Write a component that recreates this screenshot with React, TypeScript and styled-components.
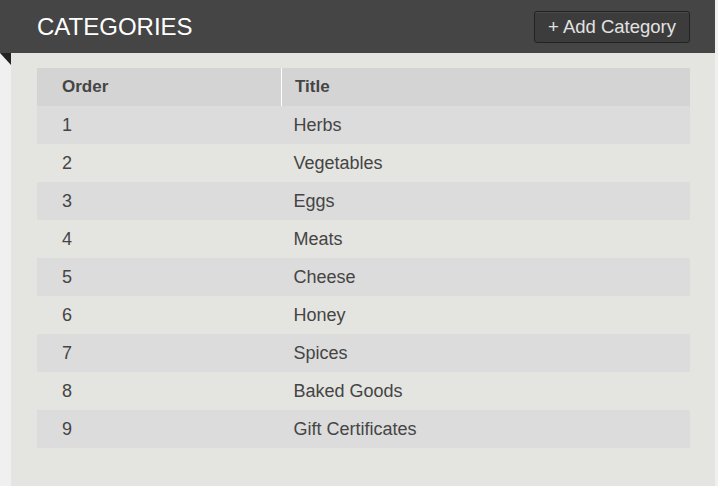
import React from 'react';
import styled, { createGlobalStyle } from 'styled-components';

const GlobalStyle = createGlobalStyle`
    html, body {
        margin: 0;
        padding: 0;
        background: #f0f0f0;
        font-family: "Liberation Sans", Arial, sans-serif;
    }
`;

const Page = styled.div`
    width: 715px;
    min-height: 486px;
    display: flex;
    flex-direction: column;
`;

const Header = styled.div`
    height: 53px;
    background: #454545;
    display: flex;
    align-items: center;
    justify-content: space-between;
    padding: 0 25px 0 37px;
    box-sizing: border-box;
`;

const Heading = styled.h1`
    margin: 0;
    font-size: 24px;
    font-weight: normal;
    color: #fff;
`;

const AddButton = styled.button`
    height: 32px;
    padding: 0 13px;
    background: #3c3c3c;
    border: 1px solid #222;
    border-radius: 3px;
    color: #e2e2e2;
    font-family: "Liberation Sans", Arial, sans-serif;
    font-size: 18.5px;
    box-shadow: inset 0 1px 0 rgba(255, 255, 255, 0.08);
    cursor: pointer;
`;

const Panel = styled.div`
    position: relative;
    flex: 1;
    margin-left: 11px;
    background: #e4e4e0;
    padding: 15px 25px 38px 26px;

    &::before {
        content: '';
        position: absolute;
        left: -11px;
        top: 0;
        border-top: 12px solid #222;
        border-left: 11px solid transparent;
    }
`;

const Table = styled.table`
    width: 100%;
    border-collapse: collapse;
    color: #454545;
    font-size: 18px;
`;

const HeadCell = styled.th<{ $divider?: boolean }>`
    height: 38px;
    padding: 0 0 0 ${p => (p.$divider ? '13px' : '25px')};
    background: #d4d4d4;
    text-align: left;
    font-size: 17px;
    font-weight: bold;
    color: #454545;
    border-left: ${p => (p.$divider ? '1px solid #fff' : 'none')};
`;

const Row = styled.tr<{ $odd: boolean }>`
    background: ${p => (p.$odd ? '#dcdcdc' : 'transparent')};
`;

const Cell = styled.td<{ $title?: boolean }>`
    height: 38px;
    padding: 0 0 0 ${p => (p.$title ? '12px' : '25px')};
    vertical-align: middle;
`;

const categories = [
    'Herbs',
    'Vegetables',
    'Eggs',
    'Meats',
    'Cheese',
    'Honey',
    'Spices',
    'Baked Goods',
    'Gift Certificates',
];

const App: React.FC = () => (
    <Page>
        <GlobalStyle />
        <Header>
            <Heading>CATEGORIES</Heading>
            <AddButton>+ Add Category</AddButton>
        </Header>
        <Panel>
            <Table>
                <thead>
                    <tr>
                        <HeadCell style={{ width: 219 }}>Order</HeadCell>
                        <HeadCell $divider>Title</HeadCell>
                    </tr>
                </thead>
                <tbody>
                    {categories.map((title, i) => (
                        <Row key={title} $odd={i % 2 === 0}>
                            <Cell>{i + 1}</Cell>
                            <Cell $title>{title}</Cell>
                        </Row>
                    ))}
                </tbody>
            </Table>
        </Panel>
    </Page>
);

export default App;
